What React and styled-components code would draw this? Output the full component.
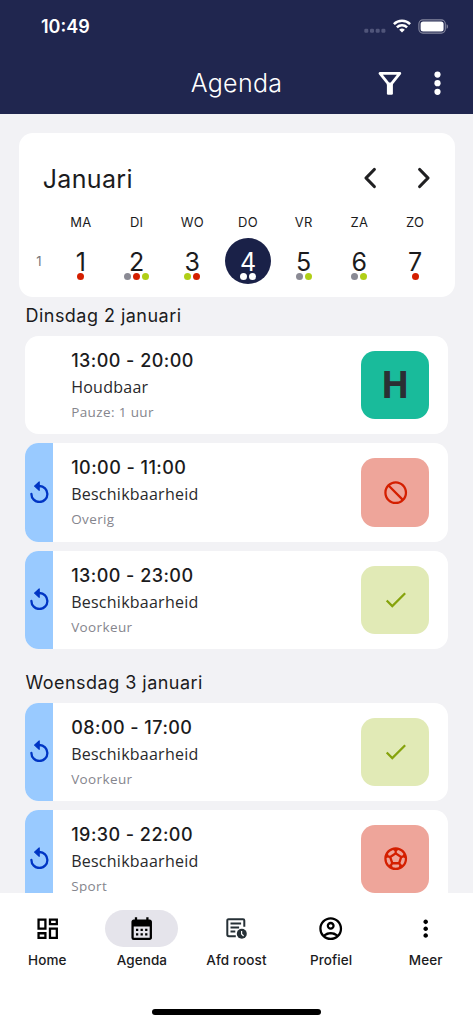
import styled, { createGlobalStyle } from "styled-components"
import {
  MdNotInterested,
  MdCheck,
  MdSportsSoccer,
  MdMoreVert,
  MdOutlineDashboard,
  MdCalendarMonth,
  MdOutlineAccountCircle,
} from "react-icons/md"

const GlobalStyle = createGlobalStyle`
* {
  box-sizing: border-box;
}
body {
  margin: 0;
  background-color: #f2f2f5;
  font-family: Inter, "Liberation Sans", sans-serif;
  color: #1b1b1d;
}
`

const Screen = styled.div`
width: 473px;
height: 1024px;
display: flex;
flex-direction: column;
overflow: hidden;
background-color: #f2f2f5;
`
const Header = styled.header`
flex: none;
height: 114.3px;
background-color: #20264f;
color: white;
`
const StatusBar = styled.div`
height: 52px;
padding: 0 24px 0 41px;
display: flex;
align-items: center;
justify-content: space-between;
`
const Clock = styled.span`
font-size: 18px;
font-weight: 600;
`
const StatusIcons = styled.div`
display: flex;
align-items: center;
`
const TitleBar = styled.div`
height: 62px;
padding-right: 32.5px;
display: grid;
grid-template-columns: 1fr auto 1fr;
align-items: center;
`
const Title = styled.h1`
grid-column: 2;
margin: 0 0 0 32.5px;
font-size: 25px;
font-weight: 300;
line-height: 30px;
letter-spacing: 0.3px;
`
const Actions = styled.div`
display: flex;
align-items: center;
justify-content: flex-end;
gap: 32px;
`
const Content = styled.main`
flex: 1;
min-height: 0;
overflow: hidden;
padding: 18.7px 18.5px 0 18.7px;
`
const Calendar = styled.section`
height: 164.3px;
background-color: white;
border-radius: 14px;
`
const MonthRow = styled.div`
height: 80px;
padding: 10px 22.5px 0 24px;
display: flex;
align-items: center;
justify-content: space-between;
`
const Month = styled.h2`
margin: 3px 0 0;
font-size: 25px;
font-weight: 400;
letter-spacing: 0.35px;
`
const Arrows = styled.div`
display: flex;
gap: 38px;
`
const Week = styled.div`
display: grid;
grid-template-columns: 34.4px repeat(7, 55.7px);
text-align: center;
`
const WeekNumber = styled.span`
padding: 40px 0 0 6px;
font-size: 13px;
line-height: 16px;
color: #77777c;
`
const Day = styled.div`
display: flex;
flex-direction: column;
align-items: center;
`
const DayName = styled.span`
height: 25px;
font-size: 13px;
line-height: 18px;
letter-spacing: 0.2px;
`
const DayCircle = styled.div`
width: 46px;
height: 46px;
border-radius: 50%;
padding-top: 10px;
display: flex;
flex-direction: column;
align-items: center;
background-color: ${(props) => (props.$active ? "#1a2148" : "transparent")};
color: ${(props) => (props.$active ? "white" : "inherit")};
`
const DayNumber = styled.span`
font-size: 25px;
line-height: 28px;
height: 25px;
`
const Dots = styled.div`
display: flex;
gap: 2px;
`
const Dot = styled.span`
width: 7px;
height: 7px;
border-radius: 50%;
background-color: ${(props) => props.$color};
`
const DayGroup = styled.section`
padding: 0 6.8px;
& + & {
  padding-top: 15px;
}
`
const GroupTitle = styled.h3`
margin: 0;
height: 38.8px;
font-size: 18px;
font-weight: 400;
line-height: 38.8px;
letter-spacing: 0.47px;
`
const Cards = styled.div`
display: flex;
flex-direction: column;
gap: 9.3px;
`
const Card = styled.article`
height: 98.1px;
padding-right: 18.3px;
display: flex;
align-items: center;
background-color: white;
border-radius: 13.5px;
overflow: hidden;
`
const Stripe = styled.div`
flex: none;
width: 27.4px;
height: 100%;
padding-bottom: 2px;
display: flex;
align-items: center;
justify-content: center;
color: #0035c4;
background-color: ${(props) => (props.$filled ? "#99caff" : "transparent")};
`
const Info = styled.div`
flex: 1;
height: 100%;
padding: 12px 0 0 18.3px;
`
const Time = styled.div`
font-size: 18px;
font-weight: 500;
line-height: 26px;
letter-spacing: 0.45px;
`
const Name = styled.div`
font-family: "Open Sans", "Noto Sans", sans-serif;
font-size: 16px;
line-height: 27px;
letter-spacing: 0.25px;
color: #29292b;
`
const Note = styled.div`
font-family: "Open Sans", "Noto Sans", sans-serif;
font-size: 13.5px;
line-height: 22px;
letter-spacing: 0.38px;
color: #85858d;
`
const Badge = styled.div`
flex: none;
width: 68.4px;
height: 68.4px;
border-radius: 14px;
display: flex;
align-items: center;
justify-content: center;
background-color: ${(props) => props.$bg};
color: ${(props) => props.$color};
`
const Letter = styled.span`
margin-bottom: 3px;
font-family: "Open Sans", sans-serif;
font-size: 37px;
font-weight: 700;
`
const BottomNav = styled.nav`
flex: none;
height: 130.7px;
background-color: white;
display: flex;
flex-direction: column;
align-items: center;
justify-content: space-between;
padding: 16.7px 0 9.5px;
`
const Tabs = styled.div`
width: 100%;
display: grid;
grid-template-columns: repeat(5, 1fr);
`
const Tab = styled.div`
display: flex;
flex-direction: column;
align-items: center;
font-size: 13.5px;
font-weight: 500;
line-height: 18px;
letter-spacing: 0.1px;
white-space: nowrap;
`
const Pill = styled.div`
width: 73px;
height: 36.5px;
margin-bottom: 4px;
border-radius: 19px;
display: flex;
align-items: center;
justify-content: center;
color: black;
background-color: ${(props) => (props.$active ? "#e5e4eb" : "transparent")};
`
const HomeBar = styled.div`
width: 169px;
height: 5.5px;
border-radius: 3px;
background-color: black;
`

const RED = "#d41f00"
const LIME = "#b0cf17"
const GREY = "#8a8a94"

const days = [
  { name: "MA", number: 1, dots: [RED] },
  { name: "DI", number: 2, dots: [GREY, RED, LIME] },
  { name: "WO", number: 3, dots: [LIME, RED] },
  { name: "DO", number: 4, dots: ["white", "white"], active: true },
  { name: "VR", number: 5, dots: [GREY, LIME] },
  { name: "ZA", number: 6, dots: [GREY, LIME] },
  { name: "ZO", number: 7, dots: [RED] },
]

const badges = {
  shift: { bg: "#19bb9b", color: "#2b2f33", content: <Letter>H</Letter> },
  blocked: { bg: "#eea59a", color: RED, content: <MdNotInterested size={27.4} /> },
  available: { bg: "#e1eab6", color: "#86a30c", content: <MdCheck size={27.4} /> },
  sport: { bg: "#eea59a", color: RED, content: <MdSportsSoccer size={27.4} /> },
}

const groups = [
  {
    title: "Dinsdag 2 januari",
    items: [
      { time: "13:00 - 20:00", name: "Houdbaar", note: "Pauze: 1 uur", badge: "shift" },
      { time: "10:00 - 11:00", name: "Beschikbaarheid", note: "Overig", badge: "blocked", repeat: true },
      { time: "13:00 - 23:00", name: "Beschikbaarheid", note: "Voorkeur", badge: "available", repeat: true },
    ],
  },
  {
    title: "Woensdag 3 januari",
    items: [
      { time: "08:00 - 17:00", name: "Beschikbaarheid", note: "Voorkeur", badge: "available", repeat: true },
      { time: "19:30 - 22:00", name: "Beschikbaarheid", note: "Sport", badge: "sport", repeat: true },
    ],
  },
]

const SignalIcon = () => (
  <svg width="22" height="18" viewBox="0 0 22 18" fill="#50557a">
    <rect x="0.3" y="11.7" width="4" height="4" rx="1.2" />
    <rect x="6" y="11.7" width="4" height="4" rx="1.2" />
    <rect x="11.7" y="11.7" width="4" height="4" rx="1.2" />
    <rect x="17.4" y="11.7" width="4" height="4" rx="1.2" />
  </svg>
)

const Wifi = styled.svg`
margin: 0 7px;
`

const WifiIcon = () => (
  <Wifi width="18" height="14" viewBox="0 0 18 14" fill="none" stroke="white" strokeWidth="2.5">
    <path d="M0.9 5.1a11.6 11.6 0 0 1 16.2 0" />
    <path d="M3.9 8.3a7.3 7.3 0 0 1 10.2 0" />
    <path d="M9 13.6L6.2 10.8a4 4 0 0 1 5.6 0z" fill="white" stroke="none" />
  </Wifi>
)

const BatteryIcon = () => (
  <svg width="31" height="15" viewBox="0 0 31 15">
    <rect x="0.9" y="0.9" width="26.4" height="13.2" rx="4" fill="none" stroke="#8588a0" strokeWidth="1.1" />
    <rect x="2.6" y="2.6" width="23" height="9.8" rx="2.5" fill="white" />
    <path d="M28.6 5.2c1.8.6 1.8 4 0 4.6z" fill="#8588a0" />
  </svg>
)

const FilterIcon = () => (
  <svg width="24" height="25" viewBox="0 0 24 25" fill="none" stroke="white" strokeWidth="2.8" strokeLinejoin="round">
    <path d="M2 2.3h19.8L13.4 12.8h-3z" />
    <rect x="8.9" y="12" width="6" height="11.8" rx="1.2" fill="white" stroke="none" />
  </svg>
)

const DotsIcon = () => (
  <svg width="7" height="25" viewBox="0 0 7 25" fill="white">
    <circle cx="3.5" cy="3.6" r="3.1" />
    <circle cx="3.5" cy="12.2" r="3.1" />
    <circle cx="3.5" cy="20.8" r="3.1" />
  </svg>
)

const Chevron = ({ d }) => (
  <svg width="16" height="24" viewBox="0 0 16 24" fill="none" stroke="#202022" strokeWidth="3.2" strokeLinecap="round" strokeLinejoin="round">
    <path d={d} />
  </svg>
)

const RepeatIcon = () => (
  <svg width="19" height="22" viewBox="0 0 19 22" fill="none" stroke="currentColor" strokeWidth="2.3" strokeLinecap="round">
    <path d="M1.4 13a8 8 0 1 0 8-8" />
    <path d="M9.2 0.9v8.4L4.6 5.1z" fill="currentColor" strokeWidth="1.2" strokeLinejoin="round" />
  </svg>
)

const RosterIcon = () => (
  <svg width="27" height="27" viewBox="0 0 27 27" fill="none" stroke="#263036" strokeWidth="2">
    <path d="M12.8 21.2H5.9a1.6 1.6 0 0 1-1.6-1.6V5.4a1.2 1.2 0 0 1 1.2-1.2h14.6a1.2 1.2 0 0 1 1.2 1.2v6.4" />
    <path d="M7.5 8.4h10.6M7.5 12.5h8.6M7.5 16.6h4.8" />
    <circle cx="18.8" cy="18.8" r="5" fill="#263036" stroke="none" />
    <path d="M18.6 15.9v3.1l2 2" stroke="white" strokeWidth="1.2" />
  </svg>
)

const tabs = [
  { label: "Home", icon: <MdOutlineDashboard size={27.4} /> },
  { label: "Agenda", icon: <MdCalendarMonth size={27.4} />, active: true },
  { label: "Afd roost", icon: <RosterIcon /> },
  { label: "Profiel", icon: <MdOutlineAccountCircle size={27.4} /> },
  { label: "Meer", icon: <MdMoreVert size={27.4} /> },
]

const App = () => {
  return (
    <Screen>
      <GlobalStyle />
      <Header>
        <StatusBar>
          <Clock>10:49</Clock>
          <StatusIcons>
            <SignalIcon />
            <WifiIcon />
            <BatteryIcon />
          </StatusIcons>
        </StatusBar>
        <TitleBar>
          <Title>Agenda</Title>
          <Actions>
            <FilterIcon />
            <DotsIcon />
          </Actions>
        </TitleBar>
      </Header>
      <Content>
        <Calendar>
          <MonthRow>
            <Month>Januari</Month>
            <Arrows>
              <Chevron d="M12.3 3.5L4 12l8.3 8.5" />
              <Chevron d="M3.7 3.5L12 12l-8.3 8.5" />
            </Arrows>
          </MonthRow>
          <Week>
            <WeekNumber>1</WeekNumber>
            {days.map((day) => (
              <Day key={day.name}>
                <DayName>{day.name}</DayName>
                <DayCircle $active={day.active}>
                  <DayNumber>{day.number}</DayNumber>
                  <Dots>
                    {day.dots.map((color, i) => (
                      <Dot key={i} $color={color} />
                    ))}
                  </Dots>
                </DayCircle>
              </Day>
            ))}
          </Week>
        </Calendar>
        {groups.map((group) => (
          <DayGroup key={group.title}>
            <GroupTitle>{group.title}</GroupTitle>
            <Cards>
              {group.items.map((item) => (
                <Card key={item.time}>
                  <Stripe $filled={item.repeat}>{item.repeat && <RepeatIcon />}</Stripe>
                  <Info>
                    <Time>{item.time}</Time>
                    <Name>{item.name}</Name>
                    <Note>{item.note}</Note>
                  </Info>
                  <Badge $bg={badges[item.badge].bg} $color={badges[item.badge].color}>
                    {badges[item.badge].content}
                  </Badge>
                </Card>
              ))}
            </Cards>
          </DayGroup>
        ))}
      </Content>
      <BottomNav>
        <Tabs>
          {tabs.map((tab) => (
            <Tab key={tab.label}>
              <Pill $active={tab.active}>{tab.icon}</Pill>
              {tab.label}
            </Tab>
          ))}
        </Tabs>
        <HomeBar />
      </BottomNav>
    </Screen>
  )
}

export default App
